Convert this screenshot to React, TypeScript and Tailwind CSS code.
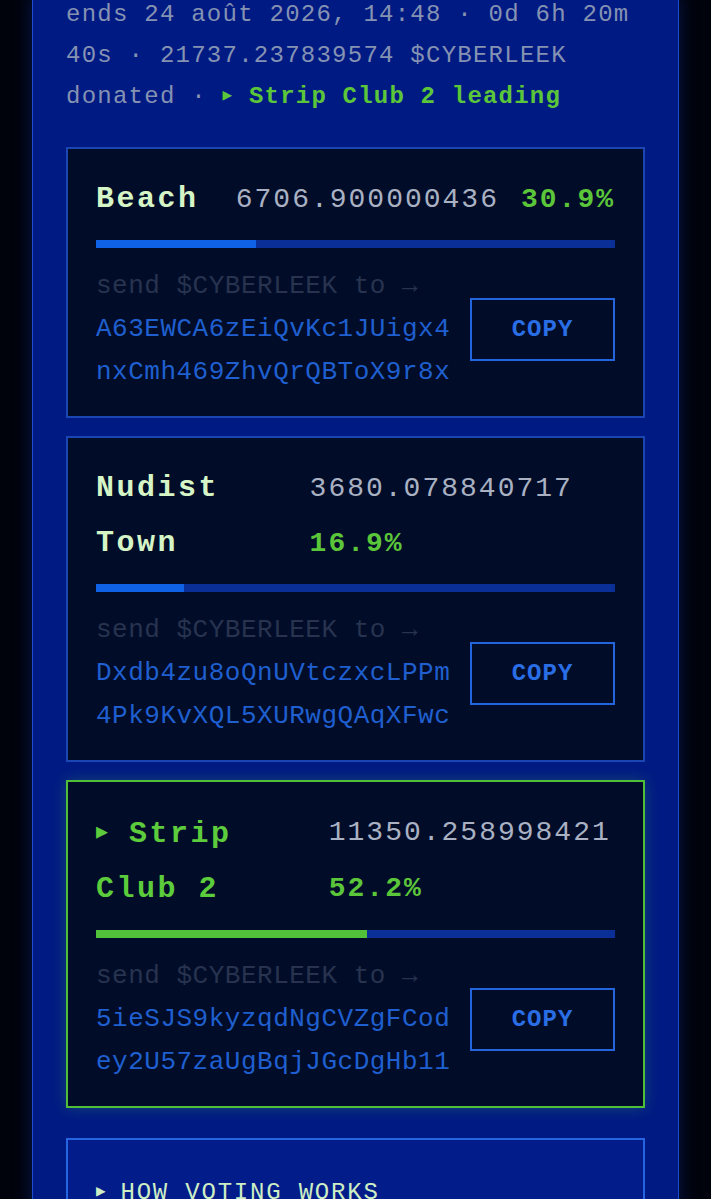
import React from 'react'

type Option = {
  name: string
  amount: string
  pct: number
  address: string
  leading?: boolean
}

const options: Option[] = [
  { name: 'Beach', amount: '6706.900000436', pct: 30.9, address: 'A63EWCA6zEiQvKc1JUigx4nxCmh469ZhvQrQBToX9r8x' },
  { name: 'Nudist Town', amount: '3680.078840717', pct: 16.9, address: 'Dxdb4zu8oQnUVtczxcLPPm4Pk9KvXQL5XURwgQAqXFwc' },
  { name: 'Strip Club 2', amount: '11350.258998421', pct: 52.2, address: '5ieSJS9kyzqdNgCVZgFCodey2U57zaUgBqjJGcDgHb11', leading: true },
]

const mono = "font-['Liberation_Mono','DejaVu_Sans_Mono',monospace]"

function OptionCard({ o }: { o: Option }) {
  // address is shown on two lines of 22 chars
  const lines = [o.address.slice(0, 22), o.address.slice(22)]
  return (
    <div
      className={
        o.leading
          ? 'border-2 border-[#4fbf3a] bg-[#010c28] px-[28px] pt-[23px] pb-[22px] shadow-[0_0_14px_rgba(80,200,60,0.25)]'
          : 'border-2 border-[#1a46b4] bg-[#010c28] px-[28px] pt-[23px] pb-[22px]'
      }
    >
      <div className="flex justify-between gap-[32px] leading-[55px]">
        <div
          className={
            o.leading
              ? 'text-[30px] font-bold tracking-[2.5px] text-[#5ccc3c]'
              : 'text-[30px] font-bold tracking-[2.5px] text-[#d6f5c6]'
          }
        >
          {o.leading && <span className="text-[20px] align-[4px] mr-[4px]">▶ </span>}
          {o.name}
        </div>
        <div className="flex flex-wrap gap-x-[22px] text-[28px] tracking-[2px]">
          <span className="text-[#a9b1c2]">{o.amount}</span>
          <span className="font-bold text-[#5cc63a]">{o.pct}%</span>
        </div>
      </div>

      <div className="mt-[13px] h-2 bg-[#0a2f96]">
        <div
          className={o.leading ? 'h-full bg-[#52c23a]' : 'h-full bg-[#0f62e6]'}
          style={{ width: `${o.pct}%` }}
        />
      </div>

      <div className="mt-[17px] flex items-center gap-[20px]">
        <div className="flex-1 min-w-0 whitespace-nowrap text-[26px] leading-[43px] tracking-[0.5px]">
          <div className="text-[#27334f]">send $CYBERLEEK to →</div>
          {lines.map((l) => (
            <div key={l} className="text-[#1f5fcf]">{l}</div>
          ))}
        </div>
        <button className="shrink-0 w-[145px] h-[63px] border-2 border-[#2464dc] text-[24px] font-bold tracking-[1px] text-[#2a6ee6]">
          COPY
        </button>
      </div>
    </div>
  )
}

export default function App() {
  return (
    <div className={`min-h-screen bg-[#00030b] overflow-hidden ${mono}`}>
      <div className="mx-[32px] min-h-[1260px] border-x border-[#1c4cd0] bg-[#001a84] px-[33px] shadow-[0_0_18px_rgba(20,60,200,0.35)]">
        <div className="-mt-[6px] -mr-[20px] whitespace-nowrap text-[24px] leading-[41px] tracking-[1.25px] text-[#8592b2]">
          <div>ends 24 août 2026, 14:48 · 0d 6h 20m</div>
          <div>40s · 21737.237839574 $CYBERLEEK</div>
          <div>
            donated ·{' '}
            <span className="font-bold tracking-[1.2px] text-[#5cc63a]">
              <span className="text-[16px] align-[3px]">▶</span> Strip Club 2 leading
            </span>
          </div>
        </div>

        <div className="mt-[30px] flex flex-col gap-[18px]">
          {options.map((o) => (
            <OptionCard key={o.name} o={o} />
          ))}
        </div>

        <div className="mt-[30px] border-2 border-[#2566e0] bg-[#021c8a] px-[28px] pt-[36px] pb-[40px]">
          <div className="text-[24px] tracking-[1.8px] text-[#cdeec4] leading-[32px]">
            <span className="text-[16px] align-[3px] mr-[13px]">▶</span>HOW VOTING WORKS
          </div>
          <div className="mt-4 h-[60px]" />
        </div>
      </div>
    </div>
  )
}
